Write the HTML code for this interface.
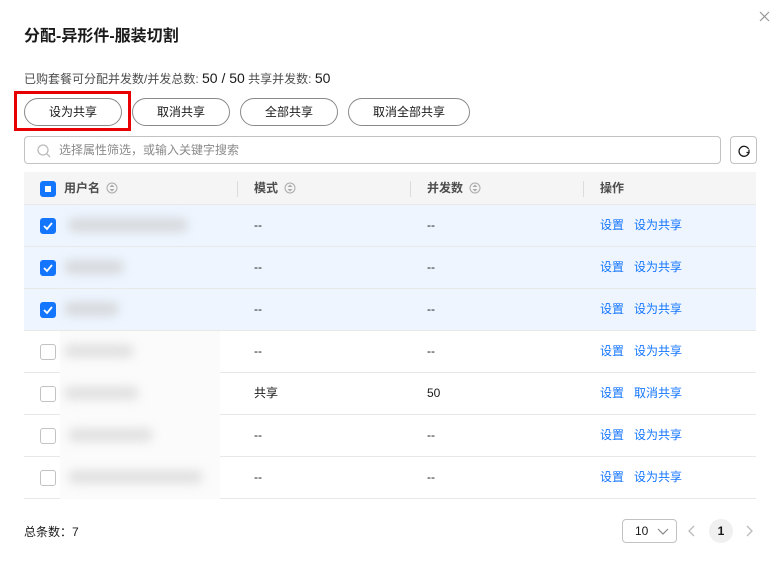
<!DOCTYPE html>
<html><head><meta charset="utf-8"><style>
*{margin:0;padding:0;box-sizing:border-box}
body{width:780px;height:578px;background:#fff;font-family:"Liberation Sans","Noto Sans CJK SC",sans-serif;position:relative;overflow:hidden;color:#191919}
.a{position:absolute}
.t{left:24px;top:22px;font-size:16px;font-weight:bold}
.btn{position:absolute;top:98px;height:28px;border:1px solid #8a8a8a;border-radius:14px;font-size:12px;text-align:center;line-height:26px;color:#191919}
.row{position:absolute;left:24px;width:732px;height:42px;border-bottom:1px solid #e8e8e8;font-size:12px}
.row span{position:absolute;top:0;line-height:40px}
.sel{background:#eef5fe}
.cb{position:absolute;left:16px;top:13px;width:16px;height:16px;border-radius:3px;border:1px solid #c2c2c2;background:#fff}
.cb.on{background:#1476ff;border-color:#1476ff}
.lnk{color:#1476ff}
.blur{position:absolute;left:60px;width:160px;height:42px;background:#fbfbfb}
.blur i{position:absolute;top:13px;height:14px;background:#c8c8c8;filter:blur(5px);border-radius:7px}
.hd{position:absolute;left:24px;top:172px;width:732px;height:33px;background:#f5f5f5;border-bottom:1px solid #e8e8e8;font-size:12px;font-weight:bold;color:#4d4d4d}
.hd span{position:absolute;top:0;line-height:33px}
.dv{position:absolute;top:9px;width:1px;height:16px;background:#dcdcdc}
.so{display:inline-block;margin-left:6px;vertical-align:-2px}
</style></head><body>
<div class="a t">分配-异形件-服装切割</div>
<svg class="a" style="left:759px;top:11px" width="11" height="11"><path d="M1 1l9 9M10 1l-9 9" stroke="#999" stroke-width="1.2"/></svg>
<div class="a" style="left:24px;top:70px;font-size:12px;color:#4d4d4d">已购套餐可分配并发数/并发总数: <span style="font-size:14px;color:#191919">50 / 50</span> 共享并发数: <span style="font-size:14px;color:#191919">50</span></div>
<div class="a" style="left:14px;top:91px;width:117px;height:40px;border:3px solid #e80000"></div>
<div class="btn" style="left:24px;width:98px">设为共享</div>
<div class="btn" style="left:132px;width:98px">取消共享</div>
<div class="btn" style="left:240px;width:98px">全部共享</div>
<div class="btn" style="left:348px;width:122px">取消全部共享</div>
<div class="a" style="left:24px;top:136px;width:697px;height:28px;border:1px solid #c2c2c2;border-radius:4px;font-size:12px;color:#8a8a8a;line-height:26px;padding-left:34px">选择属性筛选，或输入关键字搜索
<svg class="a" style="left:12px;top:7px" width="14" height="14" viewBox="0 0 14 14"><circle cx="6" cy="6" r="5" fill="none" stroke="#bbb" stroke-width="1.3"/><path d="M10 10l3 3" stroke="#bbb" stroke-width="1.3"/></svg></div>
<div class="a" style="left:730px;top:136px;width:27px;height:28px;border:1px solid #c2c2c2;border-radius:4px">
<svg class="a" style="left:6px;top:7px" width="14" height="14" viewBox="0 0 14 14"><path d="M11.5 5A5 5 0 1 0 12 8" fill="none" stroke="#191919" stroke-width="1.3"/><path d="M9.5 8.5l2.5 0 0-3" fill="none" stroke="#191919" stroke-width="1.3"/></svg></div>
<div class="hd"><div class="cb on" style="top:9px"><div style="position:absolute;left:4px;top:4px;width:6px;height:6px;background:#fff"></div></div>
<span style="left:40px">用户名<svg class="so" width="12" height="12" viewBox="0 0 12 12"><circle cx="6" cy="6" r="5" fill="none" stroke="#aaa"/><path d="M3.5 5L6 2.5 8.5 5zM3.5 7L6 9.5 8.5 7z" fill="#aaa"/></svg></span><div class="dv" style="left:213px"></div>
<span style="left:230px">模式<svg class="so" width="12" height="12" viewBox="0 0 12 12"><circle cx="6" cy="6" r="5" fill="none" stroke="#aaa"/><path d="M3.5 5L6 2.5 8.5 5zM3.5 7L6 9.5 8.5 7z" fill="#aaa"/></svg></span><div class="dv" style="left:386px"></div>
<span style="left:403px">并发数<svg class="so" width="12" height="12" viewBox="0 0 12 12"><circle cx="6" cy="6" r="5" fill="none" stroke="#aaa"/><path d="M3.5 5L6 2.5 8.5 5zM3.5 7L6 9.5 8.5 7z" fill="#aaa"/></svg></span><div class="dv" style="left:559px"></div>
<span style="left:576px">操作</span></div>
<div class="row sel" style="top:205px"><div class="cb on"><svg width="14" height="14"><path d="M3 7l3 3 5-6" stroke="#fff" stroke-width="1.8" fill="none"/></svg></div><span style="left:230px">--</span><span style="left:403px">--</span><span style="left:576px" class="lnk">设置&nbsp;&nbsp;&nbsp;设为共享</span></div>
<div class="row sel" style="top:247px"><div class="cb on"><svg width="14" height="14"><path d="M3 7l3 3 5-6" stroke="#fff" stroke-width="1.8" fill="none"/></svg></div><span style="left:230px">--</span><span style="left:403px">--</span><span style="left:576px" class="lnk">设置&nbsp;&nbsp;&nbsp;设为共享</span></div>
<div class="row sel" style="top:289px"><div class="cb on"><svg width="14" height="14"><path d="M3 7l3 3 5-6" stroke="#fff" stroke-width="1.8" fill="none"/></svg></div><span style="left:230px">--</span><span style="left:403px">--</span><span style="left:576px" class="lnk">设置&nbsp;&nbsp;&nbsp;设为共享</span></div>
<div class="row" style="top:331px"><div class="cb"></div><span style="left:230px">--</span><span style="left:403px">--</span><span style="left:576px" class="lnk">设置&nbsp;&nbsp;&nbsp;设为共享</span></div>
<div class="row" style="top:373px"><div class="cb"></div><span style="left:230px">共享</span><span style="left:403px">50</span><span style="left:576px" class="lnk">设置&nbsp;&nbsp;&nbsp;取消共享</span></div>
<div class="row" style="top:415px"><div class="cb"></div><span style="left:230px">--</span><span style="left:403px">--</span><span style="left:576px" class="lnk">设置&nbsp;&nbsp;&nbsp;设为共享</span></div>
<div class="row" style="top:457px"><div class="cb"></div><span style="left:230px">--</span><span style="left:403px">--</span><span style="left:576px" class="lnk">设置&nbsp;&nbsp;&nbsp;设为共享</span></div>
<div class="blur" style="top:205px;background:transparent"><i style="left:8px;width:120px;opacity:.6"></i></div>
<div class="blur" style="top:247px;background:transparent"><i style="left:4px;width:60px;opacity:.6"></i></div>
<div class="blur" style="top:289px;background:transparent"><i style="left:4px;width:55px;opacity:.6"></i></div>
<div class="blur" style="top:331px"><i style="left:4px;width:70px;opacity:.5"></i></div>
<div class="blur" style="top:373px"><i style="left:4px;width:75px;opacity:.5"></i></div>
<div class="blur" style="top:415px"><i style="left:8px;width:85px;opacity:.5"></i></div>
<div class="blur" style="top:457px"><i style="left:8px;width:135px;opacity:.5"></i></div>
<div class="a" style="left:24px;top:523px;font-size:12px;color:#191919">总条数：7</div>
<div class="a" style="left:622px;top:519px;width:55px;height:24px;border:1px solid #c2c2c2;border-radius:4px;font-size:12px;line-height:22px;padding-left:12px">10<svg class="a" style="left:34px;top:8px" width="12" height="8"><path d="M1 1l5 5 5-5" stroke="#888" fill="none" stroke-width="1.2"/></svg></div>
<svg class="a" style="left:688px;top:525px" width="8" height="12"><path d="M6 1L1 6l5 5" stroke="#bbb" fill="none" stroke-width="1.3"/></svg>
<div class="a" style="left:709px;top:519px;width:24px;height:24px;border-radius:12px;background:#f0f0f0;font-size:12px;font-weight:bold;text-align:center;line-height:24px">1</div>
<svg class="a" style="left:745px;top:525px" width="8" height="12"><path d="M2 1l5 5-5 5" stroke="#bbb" fill="none" stroke-width="1.3"/></svg>
</body></html>
